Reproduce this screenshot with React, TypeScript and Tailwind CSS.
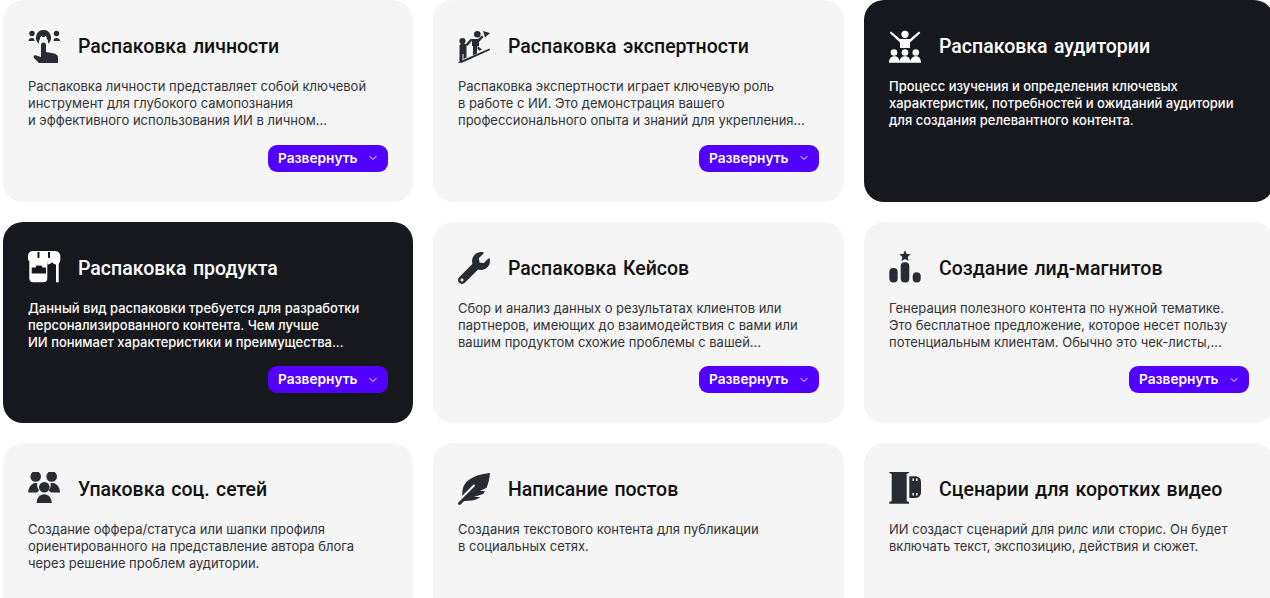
import type { ReactNode } from 'react';
import { FaWrench, FaFeatherAlt } from 'react-icons/fa';
import { ChevronDown } from 'lucide-react';

const TouchIcon = () => (
  <svg viewBox="0 0 34 34" className="w-[34px] h-[34px]" fill="currentColor">
    <circle cx="4" cy="4.500" r="2.700" />
    <circle cx="28.500" cy="4.500" r="2.700" />
    <path d="M0.500 12c0-2 1.500-3 3.500-3s2.500 1 2.500 3zM25.500 12c0-2 1-3 3-3s3.500 1 3.500 3z" />
    <path fillRule="evenodd" d="M15.500 1a7.500 7.500 0 0 1 4.500 13.500V12a4 4 0 0 0-1-2 3.500 3.500 0 1 0-7 0 4 4 0 0 0-1 2v2.500A7.500 7.500 0 0 1 15.500 1z" />
    <circle cx="15.500" cy="6" r="2.200" />
    <path d="M13 16a2.500 2.500 0 0 1 5 0v7l8 1.500c2.500.5 4 2 4 4.500v5H11l-5-5c-1-1.500 0-3 1.500-2.700L13 28z" />
  </svg>
);

const ClimbersIcon = () => (
  <svg viewBox="0 0 34 34" className="w-[34px] h-[34px]" fill="currentColor">
    <circle cx="4.500" cy="12" r="3.100" />
    <circle cx="19.300" cy="5.300" r="3.300" />
    <path d="M1.500 17c0-1.500 1-2 2-2h5v13.500l-3 1.500v-5H4.500v6.500l-3 1.500z" />
    <path d="M7.500 15.500l5.500-6 1.500 1.500-5 6z" />
    <path d="M14 10h6l4-3.500 1.500 1.500-4.500 5v4h-7z" />
    <path d="M25 2l7 2-5 4.500z" />
    <path d="M15 17h4v7.500l-4 1.800zM19.500 17l4.500 3.500-2.500 1.200-2-1.700z" />
    <path d="M0.300 33L31.500 19.500l.7 1.500L4 33.700H.3z" />
  </svg>
);

const AudienceIcon = () => (
  <svg viewBox="0 0 34 34" className="w-[34px] h-[34px]" fill="currentColor">
    <circle cx="16" cy="5.300" r="3.600" />
    <path d="M2 2.500L11 10h10l9-7.500 1.300 1.500L21 13.500V19H11v-5.500L.8 4z" />
    <circle cx="5" cy="23.500" r="3.300" />
    <circle cx="16" cy="23.500" r="3.300" />
    <circle cx="26.800" cy="23.500" r="3.300" />
    <path d="M0 33.700c0-3.800 2-6.500 5.500-6.500s5 2.700 5.500 6.500zM10.500 33.700c0-3.800 2-6.500 5.500-6.500s5.500 2.700 5.500 6.500zM21 33.700c.5-3.800 2.300-6.500 5.800-6.500s5.200 2.700 5.200 6.500z" />
  </svg>
);

const StoreIcon = () => (
  <svg viewBox="0 0 34 34" className="w-[34px] h-[34px]" fill="currentColor">
    <path fillRule="evenodd" d="M5 0h22c3 0 5.300 2.300 5.300 5v4c0 2.500-1.800 4.500-4 4.500-2 0-3.500-1-4.300-2.500-.8 1.500-2.500 2.500-4.500 2.500H19.300V10H1.300C.5 9.500 0 9 0 8.500V5c0-3 2.300-5 5-5zM9.500 1v5.500c.6 1 1.400 1 2 0V1zM20 1v5.500c.6 1 1.400 1 2 0V1z" />
    <path fillRule="evenodd" d="M1.300 9h18v18.300a4 4 0 0 1-4 4h-10a4 4 0 0 1-4-4zM3.700 16.500v6H18v-6h-3.500l-1-2h-5l-1 2z" />
    <path d="M28 11h2.700v20.300H28z" />
  </svg>
);

const RatingIcon = () => (
  <svg viewBox="0 0 34 34" className="w-[34px] h-[34px]" fill="currentColor">
    <rect x="0.300" y="17" width="8.400" height="14.500" rx="4" />
    <rect x="11.700" y="11.300" width="8.600" height="20.200" rx="4" />
    <rect x="23.700" y="21.300" width="8" height="10.200" rx="4" />
    <path d="M16 -0.800l1.700 3.700 4 .4-3 2.700.9 4L16 8l-3.600 2 .9-4-3-2.700 4-.4z" />
  </svg>
);

const GroupIcon = () => (
  <svg viewBox="0 0 34 34" className="w-[34px] h-[34px]" fill="currentColor">
    <circle cx="7.700" cy="4.500" r="5.300" />
    <circle cx="23.700" cy="4.500" r="5.300" />
    <circle cx="16.300" cy="15.300" r="5.300" />
    <path d="M0.300 20.500c0-5 3-9 7-9.500h2c-.7 3 .3 6 2 7.500-1 .5-1.800 1.200-2.300 2z" />
    <path d="M32 20.500c0-5-3-9-7-9.500h-2.500c.7 3-.3 6-2 7.500 1 .5 2 1.200 2.500 2z" />
    <path d="M8.700 31c0-5 3-8.800 7.500-8.800s7.500 3.800 7.500 8.800z" />
  </svg>
);

const ScriptIcon = () => (
  <svg viewBox="0 0 34 34" className="w-[34px] h-[34px]" fill="currentColor">
    <path d="M0.300 -0.700h19.700v1.700l-2.300 1v27l2.300 1v1.700H.3v-1.700l2.400-1v-27l-2.400-1z" />
    <path fillRule="evenodd" d="M20.300 4.300h6c3.500 0 5.700 2.500 5.700 6v10c0 3.500-2.200 5.700-5.700 5.700h-6zM23.500 6.500v2.500h1.500V6.500zM27 6.500v2.500h1.500V6.500zM23.500 21v2.500h1.500V21zM27 21v2.500h1.500V21z" />
  </svg>
);

type CardData = {
  icon: ReactNode;
  title: string;
  lines: string[];
  dark?: boolean;
  more?: boolean;
};

const cards: CardData[] = [
  {
    icon: <TouchIcon />,
    title: 'Распаковка личности',
    lines: ['Распаковка личности представляет собой ключевой', 'инструмент для глубокого самопознания', 'и эффективного использования ИИ в личном...'],
    more: true,
  },
  {
    icon: <ClimbersIcon />,
    title: 'Распаковка экспертности',
    lines: ['Распаковка экспертности играет ключевую роль', 'в работе с ИИ. Это демонстрация вашего', 'профессионального опыта и знаний для укрепления...'],
    more: true,
  },
  {
    icon: <AudienceIcon />,
    title: 'Распаковка аудитории',
    lines: ['Процесс изучения и определения ключевых', 'характеристик, потребностей и ожиданий аудитории', 'для создания релевантного контента.'],
    dark: true,
  },
  {
    icon: <StoreIcon />,
    title: 'Распаковка продукта',
    lines: ['Данный вид распаковки требуется для разработки', 'персонализированного контента. Чем лучше', 'ИИ понимает характеристики и преимущества...'],
    dark: true,
    more: true,
  },
  {
    icon: <FaWrench className="w-[32px] h-[32px]" />,
    title: 'Распаковка Кейсов',
    lines: ['Сбор и анализ данных о результатах клиентов или', 'партнеров, имеющих до взаимодействия с вами или', 'вашим продуктом схожие проблемы с вашей...'],
    more: true,
  },
  {
    icon: <RatingIcon />,
    title: 'Создание лид-магнитов',
    lines: ['Генерация полезного контента по нужной тематике.', 'Это бесплатное предложение, которое несет пользу', 'потенциальным клиентам. Обычно это чек-листы,...'],
    more: true,
  },
  {
    icon: <GroupIcon />,
    title: 'Упаковка соц. сетей',
    lines: ['Создание оффера/статуса или шапки профиля', 'ориентированного на представление автора блога', 'через решение проблем аудитории.'],
  },
  {
    icon: <FaFeatherAlt className="w-[32px] h-[32px]" />,
    title: 'Написание постов',
    lines: ['Создания текстового контента для публикации', 'в социальных сетях.'],
  },
  {
    icon: <ScriptIcon />,
    title: 'Сценарии для коротких видео',
    lines: ['ИИ создаст сценарий для рилс или сторис. Он будет', 'включать текст, экспозицию, действия и сюжет.'],
  },
];

function Card({ icon, title, lines, dark, more }: CardData) {
  return (
    <div className={`h-[201.5px] rounded-[20px] pt-[28px] px-[25px] flex flex-col ${dark ? 'bg-[#17181d]' : 'bg-[#f5f5f5]'}`}>
      <div className="flex items-center h-[36px] gap-[16px]">
        <div className={`w-[34px] h-[34px] flex items-center justify-start shrink-0 ${dark ? 'text-white' : 'text-[#282b31]'}`}>{icon}</div>
        <div className={`pt-[2px] text-[19.5px] font-medium [word-spacing:1.5px] whitespace-nowrap font-['Roboto',sans-serif] ${dark ? 'text-white' : 'text-[#111111]'}`}>
          {title}
        </div>
      </div>
      <div className={`mt-[14px] text-[13px] leading-[17px] whitespace-nowrap ${dark ? 'text-white font-medium' : 'text-[#303236]'}`}>
        {lines.map((line) => (
          <div key={line}>{line}</div>
        ))}
      </div>
      {more && (
        <div className="flex justify-end mt-[15.5px]">
          <button className="w-[120px] h-[27px] rounded-[9px] bg-[#5200ff] text-white text-[13.7px] font-semibold flex items-center pl-[10px] pr-[9px] justify-between">
            Развернуть
            <ChevronDown className="w-[12px] h-[12px]" strokeWidth={2} />
          </button>
        </div>
      )}
    </div>
  );
}

export default function App() {
  return (
    <div className="w-[1270px] h-[598px] overflow-hidden bg-white pl-[3px] font-['Inter',sans-serif]">
      <div className="grid grid-cols-[410px_411px_410px] gap-x-[20px] gap-y-[20px] w-[1280px]">
        {cards.map((c) => (
          <Card key={c.title} {...c} />
        ))}
      </div>
    </div>
  );
}
